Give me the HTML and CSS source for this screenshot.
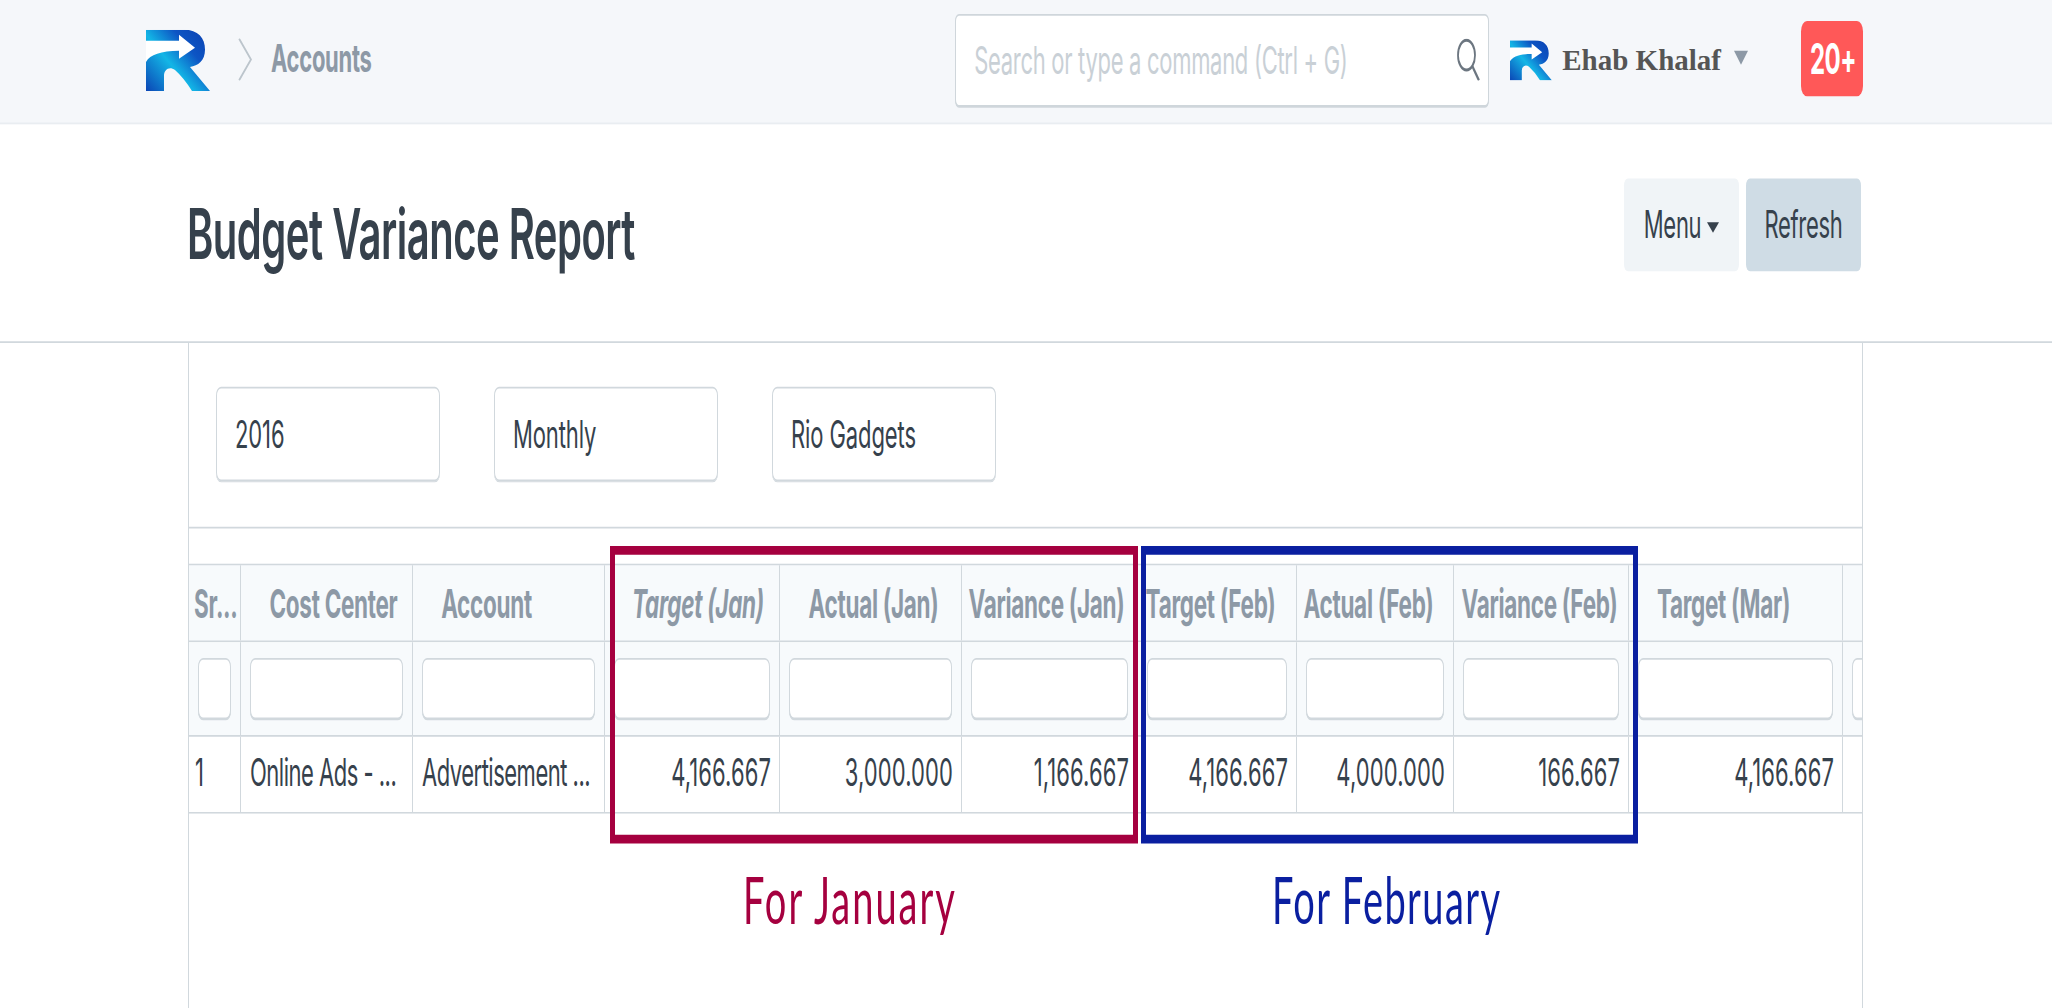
FILE: index.html
```html
<!DOCTYPE html>
<html lang="en">
  <head>
    <meta charset="utf-8">
    <title>Budget Variance Report</title>
    <link rel="stylesheet" href="styles.css">
  </head>
  <body>
    <svg class="defs" width="0" height="0">
      <defs>
        <linearGradient id="logo-fill" x1="0" y1="1" x2="1" y2="0.2">
          <stop offset="0" stop-color="#0b45b5"/>
          <stop offset="0.45" stop-color="#13b6e6"/>
          <stop offset="0.75" stop-color="#0d55c4"/>
          <stop offset="1" stop-color="#0b45b5"/>
        </linearGradient>
        <symbol id="logo" viewBox="0 0 64 61" preserveAspectRatio="none">
          <path fill="url(#logo-fill)" d="M0 0H38C52 0 59 8 59 20C59 31 52 36 44 37L64 61H46Q38 48 29 40C23 36 18 40 18 46V61H0Z"/>
          <path fill="#fff" d="M0 11H33V5L49 18L33 29V21C15 21 4 25 0 32Z"/>
        </symbol>
      </defs>
    </svg>

    <div class="page">
      <nav class="navbar">
        <svg class="logo"><use href="#logo"/></svg>
        <svg class="chevron" viewBox="0 0 14 24" preserveAspectRatio="none">
          <polyline points="1,0 13,12 1,24" fill="none" stroke="#bcc5cc" stroke-width="1.5"/>
        </svg>
        <span class="crumb">Accounts</span>
        <div class="search">
          <span class="search-text">Search or type a command (Ctrl + G)</span>
          <svg class="search-icon" viewBox="0 0 24 24" preserveAspectRatio="none">
            <circle cx="10.5" cy="9.5" r="8.5" fill="none" stroke="#6c7680" stroke-width="1.8"/>
            <line x1="16.5" y1="16" x2="23" y2="24" stroke="#6c7680" stroke-width="2"/>
          </svg>
        </div>
        <svg class="user-logo"><use href="#logo"/></svg>
        <span class="user-name">Ehab Khalaf</span>
        <span class="caret"></span>
        <span class="badge">20+</span>
      </nav>

      <header class="page-head">
        <h1>Budget Variance Report</h1>
        <div class="actions">
          <button class="btn">Menu <span class="btn-caret"></span></button>
          <button class="btn btn-dark">Refresh</button>
        </div>
      </header>

      <main class="panel">
        <section class="filters">
          <div class="field">2016</div>
          <div class="field">Monthly</div>
          <div class="field">Rio Gadgets</div>
        </section>

        <section class="report">
          <div class="row row-head">
            <div class="cell">Sr...</div>
            <div class="cell">Cost Center</div>
            <div class="cell">Account</div>
            <div class="cell italic">Target (Jan)</div>
            <div class="cell">Actual (Jan)</div>
            <div class="cell">Variance (Jan)</div>
            <div class="cell">Target (Feb)</div>
            <div class="cell">Actual (Feb)</div>
            <div class="cell">Variance (Feb)</div>
            <div class="cell">Target (Mar)</div>
            <div class="cell"></div>
          </div>
          <div class="row row-filter">
            <div class="cell"><div class="box"></div></div>
            <div class="cell"><div class="box"></div></div>
            <div class="cell"><div class="box"></div></div>
            <div class="cell"><div class="box"></div></div>
            <div class="cell"><div class="box"></div></div>
            <div class="cell"><div class="box"></div></div>
            <div class="cell"><div class="box"></div></div>
            <div class="cell"><div class="box"></div></div>
            <div class="cell"><div class="box"></div></div>
            <div class="cell"><div class="box"></div></div>
            <div class="cell"><div class="box"></div></div>
          </div>
          <div class="row row-body">
            <div class="cell">1</div>
            <div class="cell tight">Online Ads - ...</div>
            <div class="cell tight">Advertisement ...</div>
            <div class="cell num">4,166.667</div>
            <div class="cell num">3,000.000</div>
            <div class="cell num">1,166.667</div>
            <div class="cell num">4,166.667</div>
            <div class="cell num">4,000.000</div>
            <div class="cell num">166.667</div>
            <div class="cell num">4,166.667</div>
            <div class="cell"></div>
          </div>
        </section>
      </main>

      <div class="mark mark-jan"></div>
      <div class="mark mark-feb"></div>
      <div class="mark-label label-jan">For January</div>
      <div class="mark-label label-feb">For February</div>
    </div>
  </body>
</html>
```

FILE: styles.css
```css
* {
  box-sizing: border-box;
}
html, body {
  margin: 0;
  height: 100%;
  overflow: hidden;
  background: #fff;
}
.defs {
  position: absolute;
}

/* the whole shot is stretched vertically, so lay out flat and scale */
.page {
  position: relative;
  width: 2052px;
  height: 576px;
  overflow: hidden;
  transform: scaleY(1.75);
  transform-origin: 0 0;
  font-family: Inter, "Liberation Sans", sans-serif;
  color: #36414c;
}

.navbar {
  display: flex;
  align-items: center;
  height: 71.4px;
  padding: 0 189px 2px 146px;
  background: #f5f7fa;
  border-bottom: 1.6px solid #e9edf1;
}
.logo {
  width: 64px;
  height: 35px;
}
.chevron {
  width: 14px;
  height: 24px;
  margin-left: 28px;
}
.crumb {
  margin-left: 19px;
  margin-bottom: 2px;
  font-size: 22px;
  font-weight: 700;
  letter-spacing: -0.3px;
  color: #8d99a6;
}
.search {
  display: flex;
  align-items: center;
  justify-content: space-between;
  width: 534px;
  height: 53px;
  margin-left: auto;
  padding: 0 8px 0 18px;
  background: #fff;
  border: 1px solid #cfd6db;
  border-radius: 4px;
  box-shadow: 0 0.6px 0 #cfd6db;
}
.search-text {
  font-size: 22px;
  letter-spacing: -0.3px;
  color: #c9d0d6;
}
.search-icon {
  width: 24px;
  height: 24px;
}
.user-logo {
  width: 42px;
  height: 23px;
  margin-left: 21px;
}
.user-name {
  margin-left: 10px;
  margin-top: 1px;
  font-family: "Liberation Serif", serif;
  font-size: 29px;
  font-weight: 700;
  color: #555;
  transform: scaleY(0.6);
}
.caret {
  width: 0;
  height: 0;
  margin-left: 13px;
  margin-bottom: 3px;
  border-left: 7.5px solid transparent;
  border-right: 7.5px solid transparent;
  border-top: 8px solid #8d99a6;
}
.badge {
  display: flex;
  align-items: center;
  justify-content: center;
  width: 62px;
  height: 43.4px;
  margin-left: 53px;
  margin-bottom: 2px;
  padding-left: 2px;
  background: #ff5858;
  border-radius: 6px;
  color: #fff;
  font-size: 24px;
  font-weight: 700;
  letter-spacing: -0.5px;
}

.page-head {
  display: flex;
  align-items: center;
  justify-content: space-between;
  height: 125px;
  padding: 0 191px 0 187px;
  border-bottom: 1.6px solid #d1d8dd;
}
.page-head h1 {
  margin: 0;
  font-size: 40px;
  font-weight: 600;
  letter-spacing: -0.5px;
  color: #36414c;
}
.actions {
  display: flex;
  gap: 7px;
  margin-bottom: 10px;
}
.btn {
  width: 115px;
  height: 53px;
  padding: 0;
  border: 0;
  border-radius: 4px;
  background: #f0f4f7;
  color: #36414c;
  font-family: inherit;
  font-size: 22px;
  letter-spacing: -0.3px;
}
.btn-dark {
  background: #cfdce5;
}
.btn-caret {
  display: inline-block;
  vertical-align: middle;
  border-left: 6px solid transparent;
  border-right: 6px solid transparent;
  border-top: 6px solid #36414c;
}

.panel {
  width: 1675px;
  height: 380px;
  margin-left: 188px;
  border-left: 1px solid #d1d8dd;
  border-right: 1px solid #d1d8dd;
}
.filters {
  display: flex;
  gap: 54px;
  padding: 24.5px 27px 26px;
  border-bottom: 1.6px solid #d1d8dd;
}
.field {
  display: flex;
  align-items: center;
  width: 224px;
  height: 54px;
  padding: 1px 18px 0;
  border: 1px solid #d1d8dd;
  border-radius: 5px;
  box-shadow: 0 0.6px 0 #d1d8dd;
  font-size: 22px;
  letter-spacing: -0.1px;
}

.report {
  margin-top: 20px;
  overflow: hidden;
}
.row {
  display: grid;
  grid-template-columns: 52px 172px 192px 175px 182px 176px 159px 157px 175px 214px 200px;
  width: 1874px;
  border-bottom: 1.6px solid #d1d8dd;
}
.row-head {
  height: 45px;
  background: #f7fafc;
  border-top: 1.6px solid #d1d8dd;
  color: #8d99a6;
  font-size: 22.5px;
  font-weight: 700;
  letter-spacing: -0.3px;
}
.row-filter {
  height: 54.5px;
  background: #f7fafc;
}
.row-body {
  height: 43.5px;
  font-size: 22px;
  letter-spacing: 0.1px;
}
.cell {
  display: flex;
  align-items: center;
  min-width: 0;
  padding: 0 9px;
  border-right: 1px solid #d1d8dd;
  white-space: nowrap;
}
.row-head .cell {
  justify-content: center;
  padding: 0;
}
.row-head .cell:first-child {
  justify-content: flex-start;
  padding-left: 5px;
}
.row-head .cell:nth-child(2) {
  padding-left: 14px;
}
.row-head .cell:nth-child(3) {
  padding-right: 44px;
}
.row-head .cell:nth-child(4) {
  padding-left: 12px;
}
.row-head .cell:nth-child(5) {
  padding-left: 6px;
}
.row-head .cell:nth-child(6) {
  padding-right: 6px;
}
.row-head .cell:nth-child(7),
.row-head .cell:nth-child(8) {
  padding-right: 13px;
}
.row-head .cell:nth-child(9) {
  padding-right: 3px;
}
.row-head .cell:nth-child(10) {
  padding-right: 24px;
}
.italic {
  font-style: italic;
}
.row-body .cell {
  padding-bottom: 3px;
}
.tight {
  letter-spacing: -0.5px;
}
.row-body .num {
  justify-content: flex-end;
  padding-right: 8px;
}
.row-body .cell:first-child {
  padding-left: 6px;
}
.box {
  width: 100%;
  height: 35.4px;
  background: #fff;
  border: 1px solid #d1d8dd;
  border-radius: 5px;
  box-shadow: 0 0.6px 0 #d1d8dd;
}

/* hand drawn annotations over the table */
.mark {
  position: absolute;
  top: 312px;
  height: 170px;
  border: 5px solid;
}
.mark-jan {
  left: 610px;
  width: 528px;
  border-color: #a5003f;
}
.mark-feb {
  left: 1141px;
  width: 497px;
  border-color: #0a1fa0;
}
.mark-label {
  position: absolute;
  top: 491px;
  font-family: Lato, "Liberation Sans", sans-serif;
  font-size: 38px;
  line-height: 44px;
  white-space: nowrap;
}
.label-jan {
  left: 743px;
  color: #a5003f;
  letter-spacing: 2px;
}
.label-feb {
  left: 1272px;
  color: #0a1fa0;
  letter-spacing: 1.4px;
}
```
